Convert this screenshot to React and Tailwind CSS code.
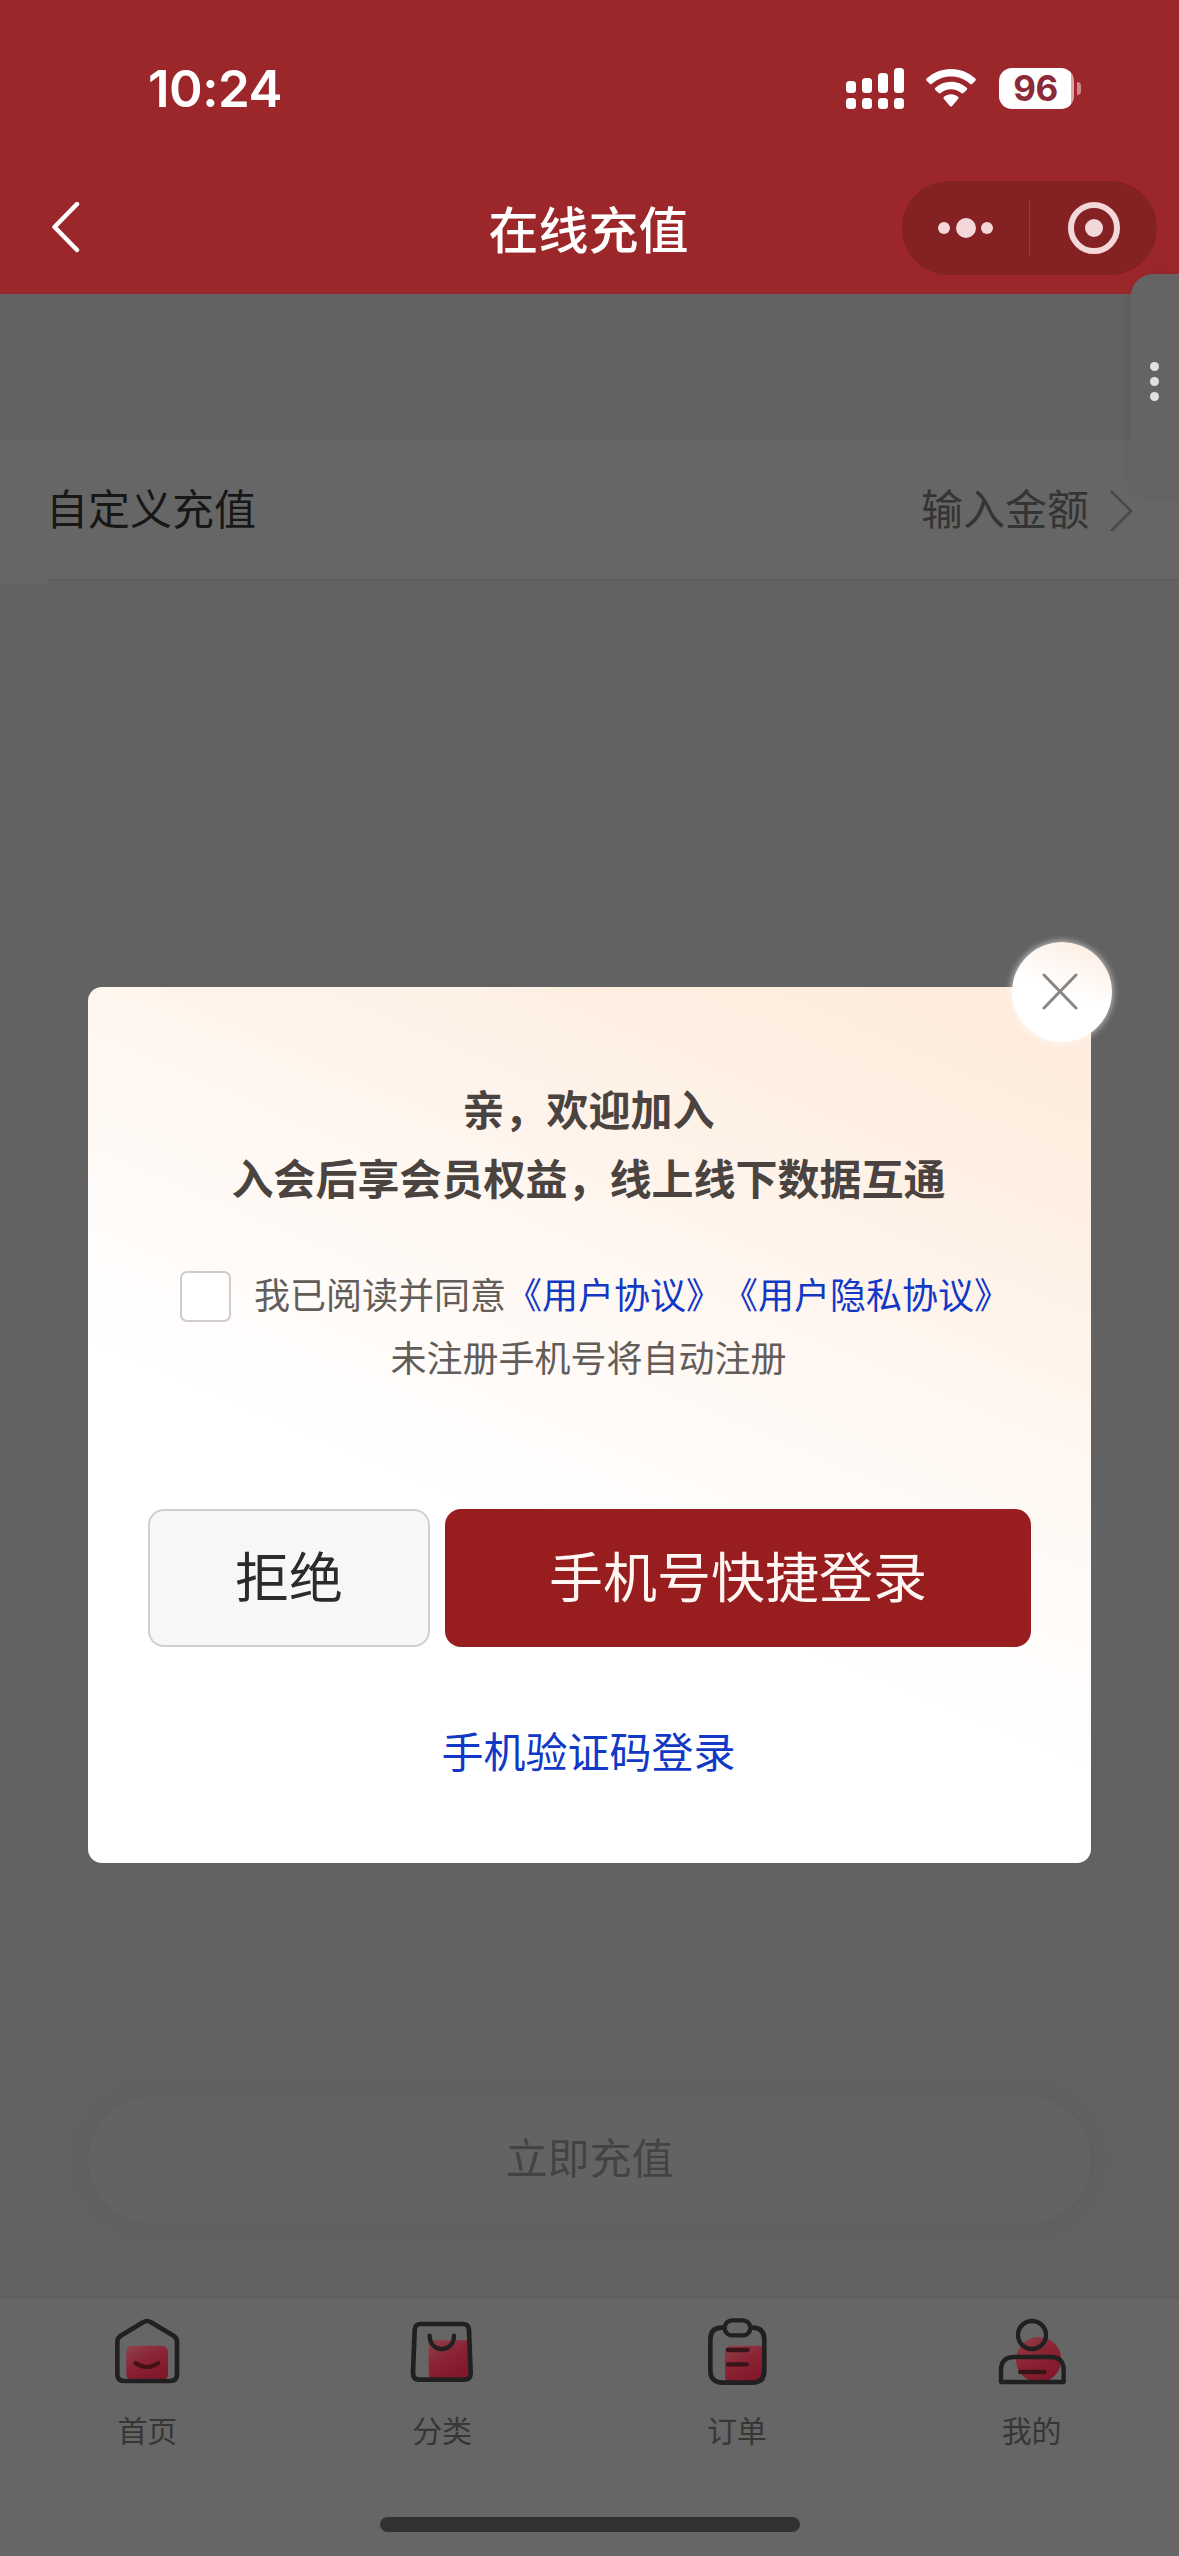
import { useState } from 'react';

function HomeIcon() {
  return (
    <svg className="h-[72px] w-[72px]" viewBox="94 76 216 216" fill="none">
      <rect x="140" y="168" width="125" height="104" rx="18" fill="url(#tabRed)" />
      <path d="M190 98 Q202 90 214 98 L284 140 Q292 146 292 156 V254 Q292 274 272 274 H133 Q113 274 113 254 V156 Q113 146 121 140 Z" stroke="#202020" strokeWidth="14" strokeLinejoin="round" />
      <path d="M167 220 Q202 244 236 220" stroke="#421216" strokeWidth="12" strokeLinecap="round" />
    </svg>
  );
}

function BagIcon() {
  return (
    <svg className="h-[72px] w-[72px]" viewBox="978 76 216 216" fill="none">
      <path d="M1046 152 H1166 V268 H1062 Q1046 268 1046 250 Z" fill="url(#tabRed)" />
      <path d="M1022 103 H1148 Q1166 103 1167 121 L1172 250 Q1172 270 1152 270 H1018 Q999 270 999 250 L1004 121 Q1005 103 1022 103 Z" stroke="#202020" strokeWidth="14" strokeLinejoin="round" />
      <path d="M1049 138 C1050 192 1121 192 1122 138" stroke="#202020" strokeWidth="13" strokeLinecap="round" />
    </svg>
  );
}

function OrderIcon() {
  return (
    <svg className="h-[72px] w-[72px]" viewBox="123 76 216 216" fill="none">
      <rect x="195" y="168" width="120" height="112" rx="16" fill="url(#tabRed)" />
      <path d="M192 114 H186 Q151 114 151 150 V242 Q151 279 188 279 H276 Q313 279 313 242 V150 Q313 114 278 114 H272" stroke="#202020" strokeWidth="14" />
      <rect x="194" y="92" width="77" height="45" rx="22" stroke="#202020" strokeWidth="13" />
      <path d="M204 181 H263 M204 224 H260" stroke="#381418" strokeWidth="13" strokeLinecap="round" />
    </svg>
  );
}

function MineIcon() {
  return (
    <svg className="h-[72px] w-[72px]" viewBox="1007 76 216 216" fill="none">
      <circle cx="1135" cy="210" r="68" fill="url(#tabRed)" />
      <circle cx="1115" cy="136" r="42" stroke="#202020" strokeWidth="13" />
      <path d="M1022 277 V242 Q1022 202 1062 202 H1170 Q1210 202 1210 242 V277 Z" stroke="#202020" strokeWidth="13" strokeLinejoin="round" />
      <path d="M1080 247 H1152" stroke="#381418" strokeWidth="14" strokeLinecap="round" />
    </svg>
  );
}

const tabs = [
  { name: '首页', icon: HomeIcon },
  { name: '分类', icon: BagIcon },
  { name: '订单', icon: OrderIcon },
  { name: '我的', icon: MineIcon },
];

function StatusBar() {
  return (
    <div className="flex h-[176px] items-center justify-between pl-[148px] pr-[98px]">
      <span className="font-['Inter',sans-serif] text-[51px] font-semibold leading-none tracking-[-0.5px]">10:24</span>
      <div className="flex items-center">
        <svg className="h-[41px] w-[58px]" viewBox="0 0 58 41" fill="currentColor">
          <rect x="0" y="13" width="10" height="12" rx="3.5" />
          <rect x="16" y="10" width="10" height="15" rx="3.5" />
          <rect x="32" y="5" width="10" height="20" rx="3.5" />
          <rect x="48" y="0" width="10" height="25" rx="3.5" />
          <rect x="0" y="30" width="10" height="11" rx="3.5" />
          <rect x="16" y="30" width="10" height="11" rx="3.5" />
          <rect x="32" y="30" width="10" height="11" rx="3.5" />
          <rect x="48" y="30" width="10" height="11" rx="3.5" />
        </svg>
        <svg className="ml-[22px] h-[39px] w-[50px]" viewBox="0 0 50 39" fill="currentColor">
          <path d="M25 0 C34.5 0 43 3.600 49.300 9.600 Q50.300 10.700 49.300 11.800 L46.300 14.800 Q45.200 15.800 44.100 14.800 C39 10.200 32.300 7.500 25 7.500 C17.700 7.500 11 10.200 5.900 14.800 Q4.800 15.800 3.700 14.800 L0.700 11.800 Q-0.300 10.700 0.700 9.600 C7 3.600 15.500 0 25 0 Z" />
          <path d="M25 12.700 C31 12.700 36.500 15 40.700 18.700 Q41.800 19.800 40.700 20.900 L37.400 24.100 Q36.400 25 35.300 24.100 C32.500 21.700 28.900 20.300 25 20.300 C21.100 20.300 17.500 21.700 14.700 24.100 Q13.600 25 12.600 24.100 L9.300 20.900 Q8.200 19.800 9.300 18.700 C13.500 15 19 12.700 25 12.700 Z" />
          <path d="M25 25.300 C27.600 25.300 30 26.200 32 27.700 Q33.200 28.800 32.100 29.900 L26.100 37 Q25 38.200 23.900 37 L17.900 29.900 Q16.800 28.800 18 27.700 C20 26.200 22.400 25.300 25 25.300 Z" />
        </svg>
        <div className="ml-[23px] flex items-center">
          <div className="flex h-[41px] w-[75px] items-center justify-center overflow-hidden rounded-[13px] bg-linear-to-r from-white from-96% to-[#dda3a6] to-96%">
            <span className="pr-[2px] font-['Inter',sans-serif] text-[35px] font-bold leading-none tracking-[-0.5px] text-[#8c2a3a]">96</span>
          </div>
          <div className="ml-[3px] h-[13px] w-[4px] rounded-r-full bg-[#d08a8d]" />
        </div>
      </div>
    </div>
  );
}

function NavBar() {
  return (
    <div className="grid grid-cols-3 items-center pl-[50px] pr-[22px] pt-[5px]">
      <svg className="h-[52px] w-[32px]" viewBox="0 0 32 52" fill="none">
        <path d="M27 2 L4.500 25 L27 48" stroke="currentColor" strokeWidth="4.500" strokeLinecap="round" strokeLinejoin="round" />
      </svg>
      <h1 className="-ml-[30px] -mt-[3px] text-center text-[50px] font-medium leading-none">在线充值</h1>
      <div className="flex h-[94px] w-[255px] items-center justify-self-end rounded-full bg-[#832123] text-[#f4d7d8]">
        <div className="flex h-[56px] w-[128px] items-center justify-center gap-[5.500px] border-r border-[#9b3c3f]">
          <span className="h-3 w-3 rounded-full bg-current" />
          <span className="h-5 w-5 rounded-full bg-current" />
          <span className="h-3 w-3 rounded-full bg-current" />
        </div>
        <div className="flex flex-1 items-center justify-center pl-px">
          <div className="flex h-[52px] w-[52px] items-center justify-center rounded-full border-[6px] border-current">
            <span className="h-[18px] w-[18px] rounded-full bg-current" />
          </div>
        </div>
      </div>
    </div>
  );
}

function LoginDialog() {
  const [agreed, setAgreed] = useState(false);

  return (
    <div className="absolute left-[88px] top-[987px] flex h-[876px] w-[1003px] flex-col items-center rounded-[14px] bg-[linear-gradient(203deg,#feecdc_0%,#feefe2_16%,#fff7f1_36%,#ffffff_60%)]">
      {/* Close button sits over the dialog corner */}
      <button className="absolute left-[924px] top-[-45px] flex h-[100px] w-[100px] items-center justify-center rounded-full bg-[linear-gradient(200deg,#fdeee4_8%,#ffffff_50%)] shadow-[0_0_6px_1px_rgba(255,255,255,0.6)]">
        <svg className="mr-[5px] h-[38px] w-[38px]" viewBox="0 0 38 38" fill="none">
          <path d="M3 2 L35 35 M35 2 L3 35" stroke="#898583" strokeWidth="3" strokeLinecap="round" />
        </svg>
      </button>

      <div className="mt-[86px] -ml-[2px] text-center text-[42px] font-bold leading-[69px] text-[#4a4340]">
        <p>亲，欢迎加入</p>
        <p>入会后享会员权益，线上线下数据互通</p>
      </div>

      <div className="mt-[60px] flex w-full items-center pl-[92px] text-[36px] leading-none text-[#635d5a]">
        <button
          onClick={() => setAgreed(!agreed)}
          className="mr-[23px] flex h-[51px] w-[51px] items-center justify-center rounded-[7px] border-2 border-[#d0cccb] bg-white"
        >
          {agreed && '✓'}
        </button>
        <div className="flex pb-[7px]">
          <span>我已阅读并同意</span>
          <span className="text-[#1238c6]">《用户协议》</span>
          <span className="text-[#1238c6]">《用户隐私协议》</span>
        </div>
      </div>
      <p className="mt-[15px] -ml-[2px] text-[36px] leading-[38px] text-[#635d5a]">未注册手机号将自动注册</p>

      <div className="mt-[134px] flex h-[138px] w-full gap-[15px] pl-[60px] pr-[60px] text-[54px] leading-none">
        <button className="w-[282px] rounded-[16px] border-2 border-[#cfcfcf] bg-[#f7f7f7] pb-[7px] text-[#2b2b2b]">拒绝</button>
        <button className="flex-1 rounded-[16px] bg-[#981d1f] pb-[7px] text-[#fff5f2]">手机号快捷登录</button>
      </div>

      <button className="mt-[82px] -ml-[2px] text-[42px] leading-[42px] text-[#1238c6]">手机验证码登录</button>
    </div>
  );
}

export default function App() {
  return (
    <div className="relative flex h-[2556px] w-[1179px] flex-col overflow-hidden bg-[#626262] font-['Noto_Sans_CJK_SC',sans-serif]">
      {/* Shared gradient for the tab icons */}
      <svg className="absolute h-0 w-0">
        <defs>
          <linearGradient id="tabRed" x1="0" y1="0" x2="0.6" y2="1">
            <stop offset="0" stopColor="#90424c" />
            <stop offset="0.5" stopColor="#8a2434" />
            <stop offset="1" stopColor="#82162a" />
          </linearGradient>
        </defs>
      </svg>

      <header className="h-[294px] w-full shrink-0 bg-[#9c272b] text-white">
        <StatusBar />
        <NavBar />
      </header>

      <main className="flex flex-1 flex-col pt-[146px]">
        <div className="flex h-[143px] items-center justify-between bg-[#666666] pb-[6px] pl-[46px] pr-[44px] text-[42px] leading-none">
          <span className="pb-[3px] text-[#171717]">自定义充值</span>
          <span className="flex items-center text-[#343434]">
            <span className="pb-[3px]">输入金额</span>
            <svg className="ml-[20px] h-[44px] w-[26px]" viewBox="0 0 26 44" fill="none">
              <path d="M2 4 L22 24 L2 44" stroke="#494949" strokeWidth="2.500" />
            </svg>
          </span>
        </div>
        <div className="-mt-[4px] ml-[48px] h-[3px] bg-[#5f5f5f]" />

        <button className="mx-[88px] mb-[72px] mt-auto h-[128px] rounded-full bg-[#636363] pb-[8px] text-[42px] leading-none text-[#434343] shadow-[0_0_32px_rgba(0,0,0,0.06)]">
          立即充值
        </button>
      </main>

      <footer className="flex h-[260px] shrink-0 flex-col items-center border-t-[3px] border-[#5f5f5f] bg-[#666666]">
        <nav className="grid w-full grid-cols-4 pt-[16px]">
          {tabs.map((tab) => (
            <div key={tab.name} className="flex flex-col items-center">
              <tab.icon />
              <span className="mt-[26px] text-[30px] leading-[32px] text-[#363636]">{tab.name}</span>
            </div>
          ))}
        </nav>
        <div className="mb-[24px] mt-auto h-[15px] w-[420px] rounded-full bg-[#323232]" />
      </footer>

      {/* Floating drawer handle on the right edge */}
      <div className="absolute right-0 top-[274px] flex h-[222px] w-[48px] flex-col items-center rounded-l-[22px] bg-[#656465] pr-px pt-[88px] shadow-[0_0_12px_rgba(0,0,0,0.08)]">
        <div className="flex flex-col gap-[6px] text-[#e2e0e1]">
          <span className="h-[9px] w-[9px] rounded-full bg-current" />
          <span className="h-[9px] w-[9px] rounded-full bg-current" />
          <span className="h-[9px] w-[9px] rounded-full bg-current" />
        </div>
      </div>

      <LoginDialog />
    </div>
  );
}
